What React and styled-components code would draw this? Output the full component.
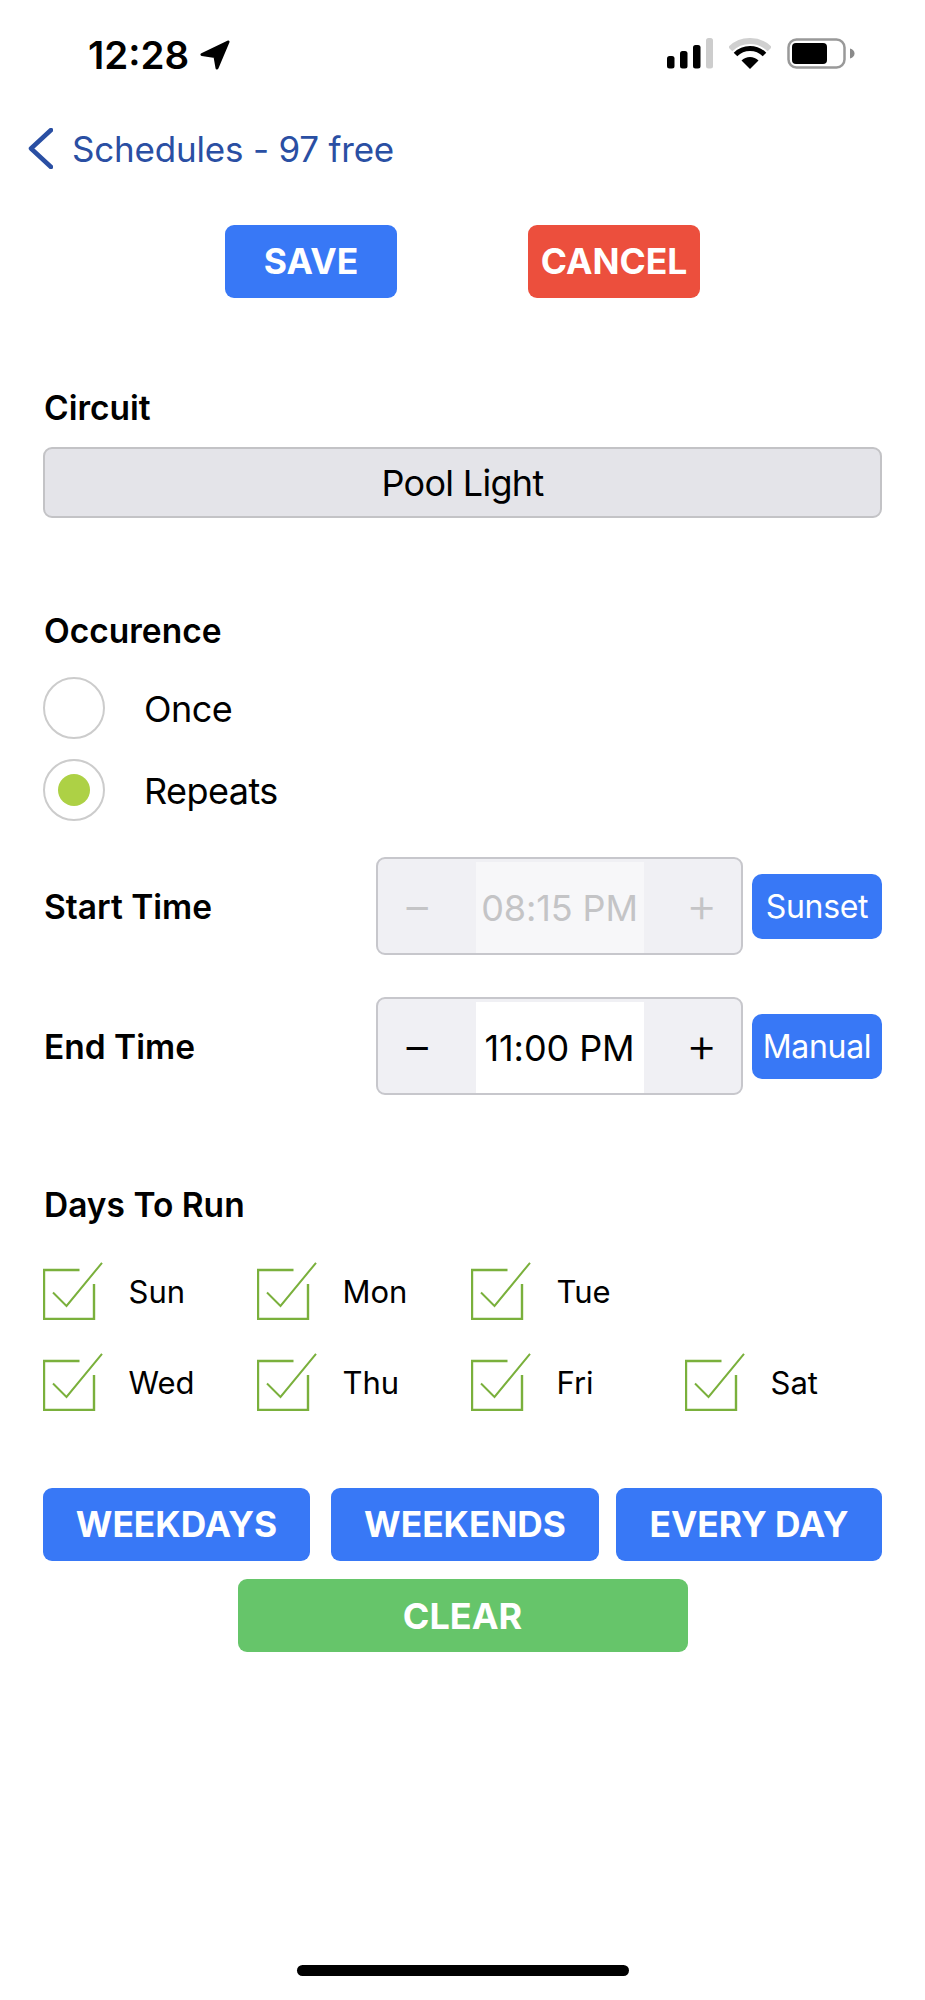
import styled, { createGlobalStyle } from "styled-components";

const days = [
  ["Sun", "Mon", "Tue"],
  ["Wed", "Thu", "Fri", "Sat"],
];

const CheckMark = () => (
  <svg width="60" height="58" viewBox="0 0 60 58" fill="none" stroke="#7ab03c">
    <path d="M36.5 8H1V57H51V22" strokeWidth="2.4" />
    <path d="M10 30.5L23.5 44L59 0.8" strokeWidth="2" />
  </svg>
);

const Stepper = ({ value, disabled }) => (
  <StepperBox $disabled={disabled}>
    <StepButton $disabled={disabled} $side="left">−</StepButton>
    <StepValue $disabled={disabled}>{value}</StepValue>
    <StepButton $disabled={disabled} $side="right">+</StepButton>
  </StepperBox>
);

export default function App() {
  return (
    <Page>
      <GlobalStyle />
      <StatusBar>
        <Clock>
          12:28
          <svg width="30" height="30" viewBox="0 0 30 30">
            <path
              d="M28 2L2 14.5L15 16.5L17 28Z"
              fill="#000"
              stroke="#000"
              strokeWidth="3"
              strokeLinejoin="round"
            />
          </svg>
        </Clock>
        <StatusIcons>
          <svg width="46" height="31" viewBox="0 0 46 31">
            <rect x="0" y="18" width="7.5" height="12.5" rx="2.5" fill="#000" />
            <rect x="13" y="13" width="7.5" height="17.5" rx="2.5" fill="#000" />
            <rect x="26" y="7" width="7.5" height="23.5" rx="2.5" fill="#000" />
            <rect x="39" y="0" width="7" height="30.5" rx="2.5" fill="#cdcdcd" />
          </svg>
          <svg width="42" height="31" viewBox="0 0 42 31" fill="none">
            <path d="M1.2 11.2A28 28 0 0 1 40.8 11.2" stroke="#d0d0d0" strokeWidth="6" />
            <path d="M6.5 16.5A20.5 20.5 0 0 1 35.5 16.5" stroke="#000" strokeWidth="5" />
            <path d="M21 31L12.5 22.5A12 12 0 0 1 29.5 22.5Z" fill="#000" />
          </svg>
          <svg width="68" height="31" viewBox="0 0 68 31">
            <rect x="1.5" y="1.5" width="56" height="28" rx="8" fill="#fff" stroke="#999" strokeWidth="2.5" />
            <rect x="5" y="5" width="35" height="21" rx="4" fill="#000" />
            <path d="M63 10.5C66 11.5 67.5 13 67.5 15.5S66 19.5 63 20.5Z" fill="#8a8a8a" />
          </svg>
        </StatusIcons>
      </StatusBar>

      <BackLink>
        <svg width="25" height="41" viewBox="0 0 25 41" fill="none">
          <path d="M23 2L3 20.5L23 39" stroke="#2a4fa3" strokeWidth="4.5" strokeLinecap="round" strokeLinejoin="round" />
        </svg>
        <BackText>Schedules - 97 free</BackText>
      </BackLink>

      <SaveRow>
        <SolidButton $color="#3878f6">SAVE</SolidButton>
        <SolidButton $color="#ec4f3d">CANCEL</SolidButton>
      </SaveRow>

      <Content>
        <Label $top={90}>Circuit</Label>
        <Field>Pool Light</Field>

        <Label $top={93}>Occurence</Label>
        <RadioGroup>
          <RadioRow>
            <Radio />
            <OptionText>Once</OptionText>
          </RadioRow>
          <RadioRow>
            <Radio $checked />
            <OptionText>Repeats</OptionText>
          </RadioRow>
        </RadioGroup>

        <TimeRow $top={36}>
          <TimeLabel>Start Time</TimeLabel>
          <Stepper value="08:15 PM" disabled />
          <ModeButton>Sunset</ModeButton>
        </TimeRow>
        <TimeRow $top={42}>
          <TimeLabel>End Time</TimeLabel>
          <Stepper value="11:00 PM" />
          <ModeButton>Manual</ModeButton>
        </TimeRow>

        <Label $top={90}>Days To Run</Label>
        <DayGrid>
          {days.map((row) => (
            <DayRow key={row[0]}>
              {row.map((day) => (
                <Day key={day}>
                  <CheckMark />
                  <DayName>{day}</DayName>
                </Day>
              ))}
            </DayRow>
          ))}
        </DayGrid>

        <ActionRow>
          <ActionButton $width={267}>WEEKDAYS</ActionButton>
          <ActionButton $width={268} $left={21}>WEEKENDS</ActionButton>
          <ActionButton $width={266} $left={17}>EVERY DAY</ActionButton>
        </ActionRow>
        <ClearButton>CLEAR</ClearButton>
      </Content>

      <HomeBar />
    </Page>
  );
}

const GlobalStyle = createGlobalStyle`
  html, body {
    margin: 0;
    padding: 0;
    background: #fff;
    font-family: Inter, "Liberation Sans", sans-serif;
    color: #000;
  }
`;

const Page = styled.div`
  width: 925px;
  height: 2000px;
  display: flex;
  flex-direction: column;
  box-sizing: border-box;
  background: #fff;
`;

const StatusBar = styled.div`
  height: 100px;
  box-sizing: border-box;
  padding: 38px 70px 0 88px;
  display: flex;
  justify-content: space-between;
  align-items: flex-start;
`;

const Clock = styled.div`
  display: flex;
  align-items: center;
  gap: 11px;
  font-size: 38.5px;
  font-weight: 600;
  line-height: 34px;
`;

const StatusIcons = styled.div`
  display: flex;
  gap: 16px;
`;

const BackLink = styled.div`
  margin-top: 28px;
  height: 41px;
  padding-left: 28px;
  display: flex;
  align-items: center;
  gap: 19px;
`;

const BackText = styled.span`
  font-size: 35px;
  letter-spacing: -0.2px;
  color: #2a4fa3;
`;

const SaveRow = styled.div`
  margin-top: 56px;
  display: flex;
  justify-content: center;
  gap: 131px;
`;

const SolidButton = styled.div`
  width: 172px;
  height: 73px;
  border-radius: 9px;
  background: ${(p) => p.$color};
  color: #fff;
  font-size: 35.5px;
  font-weight: 700;
  display: flex;
  align-items: center;
  justify-content: center;
`;

const Content = styled.div`
  padding: 0 43px;
  display: flex;
  flex-direction: column;
`;

const Label = styled.div`
  margin-top: ${(p) => p.$top}px;
  padding-left: 1px;
  font-size: 33.5px;
  font-weight: 600;
  line-height: 40px;
`;

const Field = styled.div`
  margin-top: 19px;
  height: 71px;
  box-sizing: border-box;
  border: 2px solid #c3c3c6;
  border-radius: 9px;
  background: #e4e4e9;
  font-size: 36px;
  letter-spacing: -0.7px;
  display: flex;
  align-items: center;
  justify-content: center;
`;

const RadioGroup = styled.div`
  margin-top: 26px;
  display: flex;
  flex-direction: column;
  gap: 20px;
`;

const RadioRow = styled.div`
  display: flex;
  align-items: center;
  gap: 39px;
`;

const Radio = styled.div`
  width: 62px;
  height: 62px;
  box-sizing: border-box;
  border: 2.5px solid #cccccc;
  border-radius: 50%;
  display: flex;
  align-items: center;
  justify-content: center;

  &::after {
    content: "";
    width: 32px;
    height: 32px;
    border-radius: 50%;
    background: ${(p) => (p.$checked ? "#add145" : "transparent")};
  }
`;

const OptionText = styled.span`
  padding-top: 2px;
  font-size: 36px;
  letter-spacing: -0.55px;
`;

const TimeRow = styled.div`
  margin-top: ${(p) => p.$top}px;
  display: flex;
  align-items: center;
  gap: 9px;
`;

const TimeLabel = styled.div`
  flex: 1;
  padding: 2px 0 0 1px;
  font-size: 33.5px;
  font-weight: 600;
`;

const StepperBox = styled.div`
  width: 367px;
  height: 98px;
  box-sizing: border-box;
  border: 2px solid #c7c7cc;
  border-radius: 9px;
  background: #f0f0f4;
  display: flex;
  align-items: stretch;
  overflow: hidden;
`;

const StepButton = styled.div`
  flex: 1;
  padding-bottom: 4px;
  box-sizing: border-box;
  padding-${(p) => (p.$side === "left" ? "right" : "left")}: 19px;
  font-size: 48px;
  font-weight: 300;
  color: ${(p) => (p.$disabled ? "#c4c4c6" : "#000")};
  display: flex;
  align-items: center;
  justify-content: center;
`;

const StepValue = styled.div`
  width: 168px;
  margin-top: 3px;
  background: ${(p) => (p.$disabled ? "#f7f7f9" : "#fff")};
  color: ${(p) => (p.$disabled ? "#c4c4c6" : "#000")};
  font-size: 36px;
  letter-spacing: -0.1px;
  white-space: nowrap;
  display: flex;
  align-items: center;
  justify-content: center;
`;

const ModeButton = styled.div`
  width: 130px;
  height: 65px;
  border-radius: 10px;
  background: #3878f6;
  color: #fff;
  font-size: 32px;
  letter-spacing: -0.3px;
  display: flex;
  align-items: center;
  justify-content: center;
`;

const DayGrid = styled.div`
  margin-top: 37px;
  display: flex;
  flex-direction: column;
  gap: 33px;
`;

const DayRow = styled.div`
  display: flex;
`;

const Day = styled.div`
  flex: none;
  width: 214px;
  display: flex;
  align-items: center;
  gap: 25.5px;
`;

const DayName = styled.span`
  font-size: 31px;
`;

const ActionRow = styled.div`
  margin-top: 77px;
  display: flex;
`;

const ActionButton = styled.div`
  width: ${(p) => p.$width}px;
  height: 73px;
  margin-left: ${(p) => p.$left || 0}px;
  border-radius: 9px;
  background: #3878f6;
  color: #fff;
  font-size: 35.3px;
  font-weight: 700;
  display: flex;
  align-items: center;
  justify-content: center;
`;

const ClearButton = styled.div`
  align-self: center;
  width: 450px;
  height: 73px;
  margin-top: 18px;
  border-radius: 9px;
  background: #66c56a;
  color: #fff;
  font-size: 36px;
  font-weight: 700;
  display: flex;
  align-items: center;
  justify-content: center;
`;

const HomeBar = styled.div`
  align-self: center;
  width: 332px;
  height: 11px;
  margin-top: auto;
  margin-bottom: 24px;
  border-radius: 6px;
  background: #000;
`;
